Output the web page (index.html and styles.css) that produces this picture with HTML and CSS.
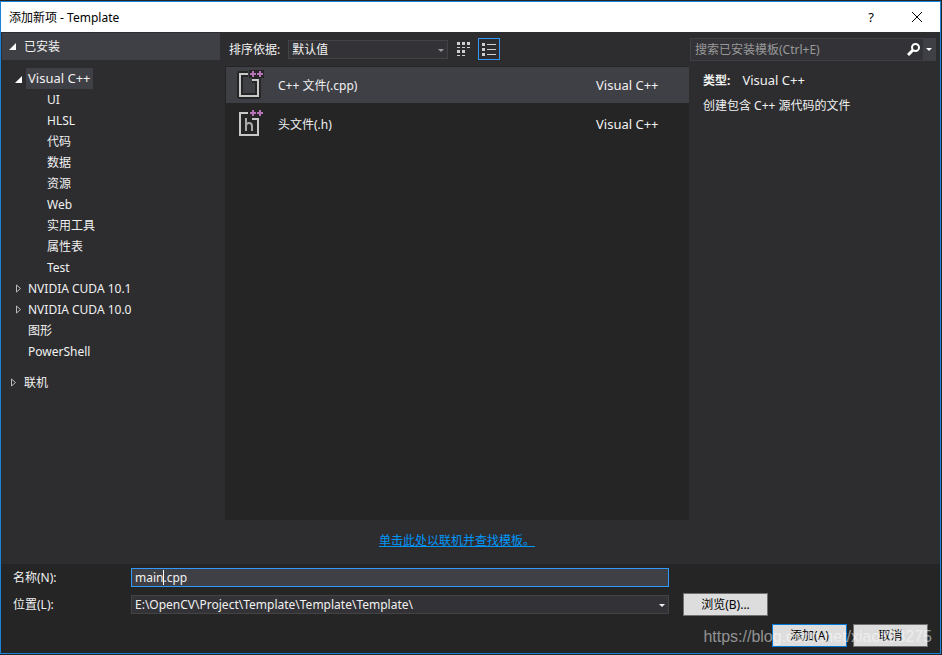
FILE: index.html
```html
<!DOCTYPE html>
<html lang="zh-CN">
<head>
    <meta charset="UTF-8">
    <meta name="viewport" content="width=device-width, initial-scale=1.0">
    <title>添加新项 - Template</title>
    <link rel="stylesheet" href="styles.css">
</head>
<body>
    <div class="dialog">
        <header class="title-bar">
            <h1>添加新项 - Template</h1>
            <button type="button" class="title-button" aria-label="Help">?</button>
            <button type="button" class="title-button" aria-label="Close">
                <svg width="12" height="12" viewBox="0 0 12 12"><path d="M1 1l10 10M11 1L1 11" stroke="#000" fill="none"/></svg>
            </button>
        </header>

        <main class="content">
            <nav class="sidebar">
                <div class="section-head">
                    <svg class="arrow" width="7" height="7" viewBox="0 0 7 7"><path d="M7 0v7H0z" fill="#fff"/></svg>
                    <span>已安装</span>
                </div>
                <ul class="tree">
                    <li><svg class="arrow" width="7" height="7" viewBox="0 0 7 7"><path d="M7 0v7H0z" fill="#fff"/></svg><a href="#" class="selected">Visual C++</a>
                        <ul class="subtree">
                            <li><a href="#">UI</a></li>
                            <li><a href="#">HLSL</a></li>
                            <li><a href="#">代码</a></li>
                            <li><a href="#">数据</a></li>
                            <li><a href="#">资源</a></li>
                            <li><a href="#">Web</a></li>
                            <li><a href="#">实用工具</a></li>
                            <li><a href="#">属性表</a></li>
                            <li><a href="#">Test</a></li>
                        </ul>
                    </li>
                    <li><svg class="arrow" width="7" height="9" viewBox="0 0 7 9"><path d="M1.5 1v7L5.5 4.5z" fill="none" stroke="#bbb"/></svg><a href="#">NVIDIA CUDA 10.1</a></li>
                    <li><svg class="arrow" width="7" height="9" viewBox="0 0 7 9"><path d="M1.5 1v7L5.5 4.5z" fill="none" stroke="#bbb"/></svg><a href="#">NVIDIA CUDA 10.0</a></li>
                    <li><span class="arrow"></span><a href="#">图形</a></li>
                    <li><span class="arrow"></span><a href="#">PowerShell</a></li>
                </ul>
                <div class="section-foot">
                    <svg class="arrow" width="7" height="9" viewBox="0 0 7 9"><path d="M1.5 1v7L5.5 4.5z" fill="none" stroke="#bbb"/></svg>
                    <span>联机</span>
                </div>
            </nav>

            <section class="templates">
                <div class="toolbar">
                    <label for="sort">排序依据:</label>
                    <div class="combo sort">
                        <select id="sort">
                            <option>默认值</option>
                        </select>
                    </div>
                    <button type="button" class="view-button" aria-label="Small icons">
                        <svg width="14" height="14" viewBox="0 0 14 14" fill="#d0d0d0"><path d="M0 0h3v3H0zM5 0h3v3H5zM10 0h3v3h-3zM0 5h3v1H0zM5 5h3v1H5zM10 5h3v1h-3zM0 8h3v3H0zM5 8h3v3H5zM0 13h3v1H0zM5 13h3v1H5z"/></svg>
                    </button>
                    <button type="button" class="view-button active" aria-label="List">
                        <svg width="14" height="13" viewBox="0 0 14 13" fill="#d0d0d0"><path d="M0 0h3v3H0zM0 5h3v3H0zM0 10h3v3H0zM5 1h9v1H5zM5 6h9v1H5zM5 11h9v1H5z"/></svg>
                    </button>
                </div>
                <ul class="template-list">
                    <li class="template current">
                        <svg width="28" height="30" viewBox="0 0 28 30"><path d="M12 4H4v22h18V10h-6" fill="none" stroke="#252526" stroke-width="6" stroke-linejoin="round"/><path d="M13 0h15v8H13z" fill="#252526"/><path d="M12 4H4v22h18V10h-6" fill="none" stroke="#c8c8c8" stroke-width="2"/><path d="M14 4h6M17 1v6M21 4h6M24 1v6" stroke="#b872b8" stroke-width="2"/></svg>
                        <span class="name">C++ 文件(.cpp)</span>
                        <span class="kind">Visual C++</span>
                    </li>
                    <li class="template">
                        <svg width="28" height="30" viewBox="0 0 28 30"><path d="M12 4H4v22h18V10h-6" fill="none" stroke="#c8c8c8" stroke-width="2"/><path d="M14 4h6M17 1v6M21 4h6M24 1v6" stroke="#b872b8" stroke-width="2"/><path d="M10 9v13M10 17q0-3 3-3t3 3v5" fill="none" stroke="#aaa" stroke-width="2"/></svg>
                        <span class="name">头文件(.h)</span>
                        <span class="kind">Visual C++</span>
                    </li>
                </ul>
                <p class="online"><a href="#">单击此处以联机并查找模板。</a></p>
            </section>

            <aside class="details">
                <div class="search">
                    <input type="search" placeholder="搜索已安装模板(Ctrl+E)" aria-label="搜索已安装模板">
                    <button type="button" class="search-button" aria-label="Search">
                        <svg width="13" height="13" viewBox="0 0 13 13"><circle cx="8.5" cy="4.5" r="3.5" fill="none" stroke="#fff" stroke-width="2"/><path d="M6 7l-5 5" stroke="#fff" stroke-width="3"/></svg>
                    </button>
                    <button type="button" class="search-menu" aria-label="Search options">
                        <svg width="6" height="3" viewBox="0 0 6 3"><path d="M0 0h6L3 3z" fill="#fff"/></svg>
                    </button>
                </div>
                <p class="type"><strong>类型:</strong><span>Visual C++</span></p>
                <p>创建包含 C++ 源代码的文件</p>
            </aside>
        </main>

        <form class="footer">
            <div class="row">
                <label for="name">名称(N):</label>
                <input type="text" id="name" value="main.cpp">
                <span class="caret"></span>
            </div>
            <div class="row">
                <label for="location">位置(L):</label>
                <div class="combo location">
                    <select id="location">
                        <option>E:\OpenCV\Project\Template\Template\Template\</option>
                    </select>
                </div>
                <button type="button" class="button browse">浏览(B)...</button>
            </div>
            <div class="actions">
                <button type="submit" class="button primary">添加(A)</button>
                <button type="button" class="button">取消</button>
            </div>
            <span class="watermark">https://blog.csdn.net/xiaoli93275</span>
        </form>
    </div>
</body>
</html>
```

FILE: styles.css
```css
* {
    box-sizing: border-box;
}
body {
    margin: 0;
    min-height: 100vh;
    display: flex;
    padding: 1px 1px 1px 0;
    background: #252526;
    color: #f1f1f1;
    font-family: "Noto Sans", "Noto Sans CJK SC", sans-serif;
    font-size: 12px;
    line-height: 21px;
}
h1, p, ul {
    margin: 0;
    padding: 0;
}
ul {
    list-style: none;
}
a {
    color: inherit;
    text-decoration: none;
}
button, input, select {
    font: inherit;
    color: inherit;
}
.dialog {
    flex: 1;
    display: flex;
    flex-direction: column;
    border: 1px solid #1883d7;
    background: #2d2d30;
}
.title-bar {
    display: flex;
    height: 30px;
    align-items: center;
    padding-left: 8px;
    background: #fff;
    color: #000;
}
.title-bar h1 {
    flex: 1;
    font-size: 12px;
    font-weight: normal;
}
.title-button {
    width: 46px;
    height: 30px;
    padding: 0;
    border: none;
    background: none;
    font-size: 13px;
}
.title-button svg {
    display: block;
    margin: 0 auto;
}
.content {
    flex: 1;
    display: flex;
}
.sidebar {
    width: 224px;
    padding: 1px 5px 0 1px;
}
.section-head {
    display: flex;
    align-items: center;
    gap: 8px;
    height: 27px;
    padding-left: 7px;
    background: #3f3f46;
}
.tree {
    padding: 8px 0 0 12px;
}
.tree .arrow {
    display: inline-block;
    width: 9px;
    margin-right: 3px;
}
.tree a {
    display: inline-block;
    padding: 0 2px;
}
.tree .selected {
    background: #3f3f46;
}
.selected,
.kind,
.type span {
    font-size: 13px;
}
.subtree {
    padding-left: 31px;
}
.section-foot {
    display: flex;
    align-items: center;
    gap: 7px;
    padding: 10px 0 0 8px;
}
.templates {
    flex: 1;
    display: flex;
    flex-direction: column;
}
.toolbar {
    display: flex;
    align-items: center;
    height: 34px;
    padding-left: 4px;
}
.combo {
    position: relative;
    height: 19px;
    border: 1px solid #434346;
    background: #333337;
}
.combo select {
    display: block;
    appearance: none;
    width: 100%;
    height: 17px;
    padding: 0 3px;
    border: none;
    background: none;
    line-height: 17px;
}
.combo::after {
    content: "";
    position: absolute;
    top: 8px;
    right: 3px;
    border: 3px solid transparent;
    border-top-color: #f1f1f1;
    border-bottom: none;
    pointer-events: none;
}
.combo.sort {
    width: 160px;
    margin: 0 5px 0 8px;
}
.combo.sort::after {
    border-top-color: #999;
}
.view-button {
    display: flex;
    align-items: center;
    justify-content: center;
    width: 22px;
    height: 22px;
    margin-right: 3px;
    padding: 0;
    border: 1px solid transparent;
    background: none;
}
.view-button.active {
    border-color: #3399ff;
}
.template-list {
    flex: 1;
    padding: 1px 0 0 1px;
    background: #252526;
}
.template {
    display: flex;
    align-items: center;
    height: 36px;
    margin-bottom: 3px;
    padding-left: 10px;
}
.template.current {
    background: #3f3f46;
}
.template .name {
    flex: 1;
    margin-left: 14px;
}
.template .kind {
    width: 93px;
}
.online {
    height: 44px;
    padding-top: 10px;
    text-align: center;
}
.online a {
    color: #0097fb;
    text-decoration: underline;
}
.details {
    width: 251px;
    padding: 6px 4px 0 1px;
}
.search {
    display: flex;
    height: 23px;
    margin-bottom: 9px;
    border: 1px solid #3f3f46;
    background: #333337;
}
.search input {
    flex: 1;
    min-width: 0;
    padding: 0 4px;
    border: none;
    background: none;
}
.search input::placeholder {
    color: #999;
}
.search button {
    display: flex;
    align-items: center;
    justify-content: center;
    padding: 0;
    border: none;
    background: none;
}
.search-button {
    width: 19px;
}
.search .search-menu {
    width: 12px;
    background: #3f3f46;
}
.details p {
    margin-bottom: 4px;
    padding-left: 13px;
}
.type span {
    margin-left: 12px;
}
.footer {
    position: relative;
    padding: 0 12px 6px;
    background: #252526;
}
.row {
    display: flex;
    align-items: center;
    position: relative;
    height: 27px;
}
.row label {
    width: 118px;
}
.row input {
    width: 538px;
    height: 19px;
    padding: 0 3px;
    border: 1px solid #3399ff;
    background: #3f3f46;
    outline: none;
}
.caret {
    position: absolute;
    left: 150px;
    width: 1px;
    height: 15px;
    background: #fff;
}
.location {
    width: 538px;
}
.button {
    width: 75px;
    height: 23px;
    padding: 0;
    border: 1px solid #707070;
    background: #ddd;
    color: #000;
    line-height: 19px;
}
.browse {
    width: 85px;
    margin-left: 14px;
}
.primary {
    border-color: #0078d7;
}
.actions {
    display: flex;
    justify-content: flex-end;
    gap: 6px;
    margin-top: 6px;
}
.watermark {
    position: absolute;
    right: 8px;
    bottom: 6px;
    color: rgba(255, 255, 255, 0.5);
    font-family: "Liberation Sans", sans-serif;
    font-size: 16px;
    pointer-events: none;
}
```
